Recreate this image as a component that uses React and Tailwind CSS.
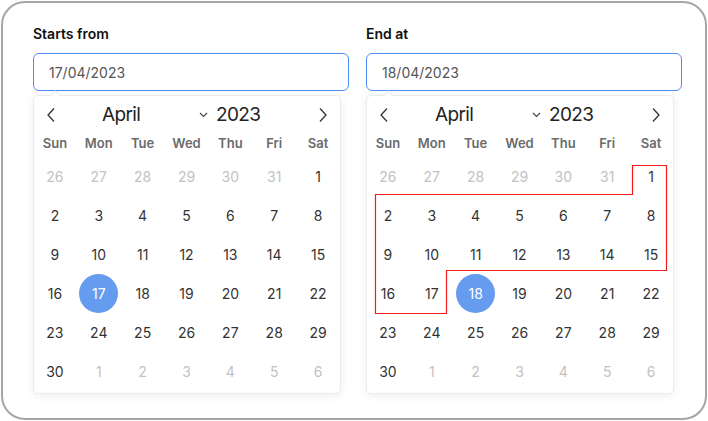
const WEEKDAYS = ["Sun", "Mon", "Tue", "Wed", "Thu", "Fri", "Sat"];

// April 2023 grid, with trailing/leading days from nearby months
const DAYS = [
  [26, 27, 28, 29, 30, 31].map((d) => ({ d, out: true })).concat([{ d: 1 }]),
  ...[2, 9, 16, 23].map((s) => Array.from({ length: 7 }, (_, i) => ({ d: s + i }))),
  [{ d: 30 }].concat([1, 2, 3, 4, 5, 6].map((d) => ({ d, out: true }))),
];

function Chevron({ dir }) {
  return (
    <svg width="10" height="16" viewBox="0 0 10 16" fill="none" stroke="#333" strokeWidth="1.3">
      {dir === "left" ? <path d="M8 1.5 L2 8 L8 14.5" /> : <path d="M2 1.5 L8 8 L2 14.5" />}
    </svg>
  );
}

function Calendar({ selected, range }) {
  return (
    <div className="relative mt-1 w-[308px] pb-[2px] bg-white rounded-[5px] border border-[#ececec] shadow-[0_2px_10px_rgba(0,0,0,0.07)]">
      <div className="absolute -top-[4px] left-[18px] w-[7px] h-[7px] rotate-45 bg-white border-t border-l border-[#ececec]" />
      <div className="flex items-center h-[38px] text-[#222]">
        <div className="w-[34px] flex justify-center">
          <Chevron dir="left" />
        </div>
        <div className="w-[146px] flex items-center">
          <span className="pl-[34px] flex-1 text-[19px] tracking-[-0.035em]">April</span>
          <svg width="9" height="6" viewBox="0 0 9 6" fill="none" stroke="#444" strokeWidth="1.1" className="mr-[6px]">
            <path d="M1 1 L4.5 4.5 L8 1" />
          </svg>
        </div>
        <span className="ml-[2px] text-[19px] tracking-[-0.035em]">2023</span>
        <div className="flex-1" />
        <div className="w-[34px] flex justify-center">
          <Chevron dir="right" />
        </div>
      </div>
      <div className="-ml-px grid grid-cols-7 h-[20px] items-center">
        {WEEKDAYS.map((w) => (
          <div key={w} className="text-center text-[13px] font-semibold text-[#6b6b6b]">
            {w}
          </div>
        ))}
      </div>
      <div className="-ml-px mt-[3px] grid grid-cols-7">
        {DAYS.flat().map((c, i) => (
          <div key={i} className="h-[39px] flex items-center justify-center">
            {!c.out && c.d === selected ? (
              <span className="w-[39px] h-[39px] rounded-full bg-[#659cf0] text-white flex items-center justify-center text-[14px]">
                {c.d}
              </span>
            ) : (
              <span className={c.out ? "text-[14px] text-[#c2c2c2]" : "text-[14px] text-[#333]"}>{c.d}</span>
            )}
          </div>
        ))}
      </div>
      {range && (
        <svg className="absolute left-0 top-0 pointer-events-none" width="308" height="297">
          <polygon
            points="265.5,69.5 299.5,69.5 299.5,174.5 79.5,174.5 79.5,217.5 8.5,217.5 8.5,98.5 265.5,98.5"
            fill="none"
            stroke="#f01c1c"
            strokeWidth="1.2"
          />
        </svg>
      )}
    </div>
  );
}

function DateField({ label, value, selected, range }) {
  return (
    <div className="w-[316px] flex flex-col">
      <label className="text-[14px] leading-[20px] font-semibold text-[#111]">{label}</label>
      <div className="mt-[9px] h-[38px] rounded-[6px] border border-[#4d8ef5] flex items-center pl-[15px] text-[14px] text-[#555]">
        {value}
      </div>
      <Calendar selected={selected} range={range} />
    </div>
  );
}

export default function App() {
  return (
    <div className="w-[708px] h-[421px] bg-white p-px font-['Inter',sans-serif]">
      <div className="w-[706px] h-[419px] border-2 border-[#a6a6a6] rounded-[24px] pl-[30px] pt-[21px]">
        <div className="flex gap-[17px]">
          <DateField label="Starts from" value="17/04/2023" selected={17} />
          <DateField label="End at" value="18/04/2023" selected={18} range />
        </div>
      </div>
    </div>
  );
}
